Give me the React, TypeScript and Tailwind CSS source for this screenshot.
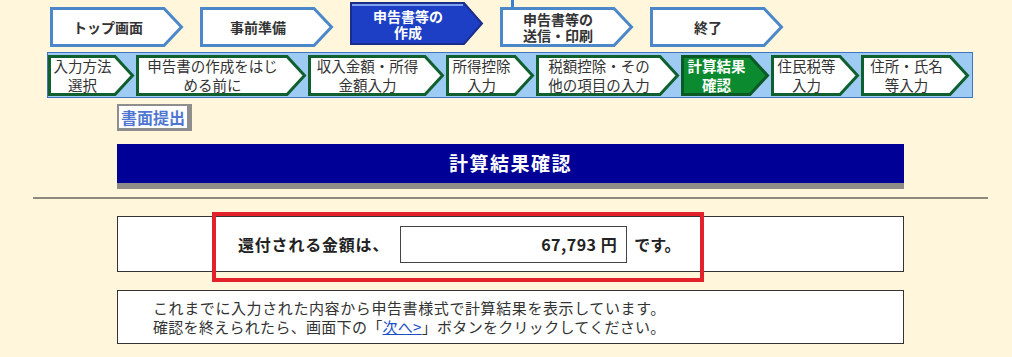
import React from "react";

type ArrowProps = {
  w: number;
  h: number;
  d: number;
  fill: string;
  stroke: string;
  sw: number;
  children: React.ReactNode;
  textClass: string;
  highlight?: string;
};

function Arrow({ w, h, d, fill, stroke, sw, children, textClass, highlight }: ArrowProps) {
  const s = sw / 2;
  const pts = `${s},${s} ${w - d},${s} ${w - s - 1},${h / 2} ${w - d},${h - s} ${s},${h - s}`;
  return (
    <div className="relative shrink-0" style={{ width: w, height: h }}>
      <svg className="absolute inset-0 overflow-visible" width={w} height={h}>
        <polygon points={pts} fill={fill} stroke={stroke} strokeWidth={sw} strokeLinejoin="miter" />
        {highlight ? (
          <line x1={sw} y1={sw + 1} x2={w - d - 1} y2={sw + 1} stroke={highlight} strokeWidth={2} />
        ) : null}
      </svg>
      <div
        className={`relative flex h-full flex-col items-center justify-center text-center ${textClass}`}
        style={{ width: w - d + 2 }}
      >
        {children}
      </div>
    </div>
  );
}

const topItems: { l1: string; l2?: string; active?: boolean }[] = [
  { l1: "トップ画面" },
  { l1: "事前準備" },
  { l1: "申告書等の", l2: "作成", active: true },
  { l1: "申告書等の", l2: "送信・印刷" },
  { l1: "終了" },
];

const subItems: { l1: string; l2: string; w: number; active?: boolean }[] = [
  { l1: "入力方法", l2: "選択", w: 87 },
  { l1: "申告書の作成をはじ", l2: "める前に", w: 171 },
  { l1: "収入金額・所得", l2: "金額入力", w: 137 },
  { l1: "所得控除", l2: "入力", w: 89 },
  { l1: "税額控除・その", l2: "他の項目の入力", w: 144 },
  { l1: "計算結果", l2: "確認", w: 89, active: true },
  { l1: "住民税等", l2: "入力", w: 89 },
  { l1: "住所・氏名", l2: "等入力", w: 109 },
];

export default function App() {
  return (
    <div className="relative h-[357px] w-[1012px] overflow-hidden bg-[#fff6db] font-['Noto_Sans_CJK_JP','Noto_Sans',sans-serif] text-[#222]">
      {/* small connector line at top */}
      <div className="absolute left-[511px] top-0 h-[8px] w-[3px] bg-[#3b7fd2]" />

      {/* top step row */}
      <div className="flex items-start gap-[16px] pl-[50px] pt-[7px]">
        {topItems.map((it, i) =>
          it.active ? (
            <div key={i} className="-mt-[5px]">
              <Arrow
                w={134}
                h={43}
                d={20}
                fill="#1d3fc6"
                stroke="#1a2d8a"
                sw={2}
                highlight="#7fa2ee"
                textClass="text-[14px] font-bold leading-[16px] text-white"
              >
                <span>{it.l1}</span>
                {it.l2 ? <span>{it.l2}</span> : null}
              </Arrow>
            </div>
          ) : (
            <Arrow
              key={i}
              w={134}
              h={40}
              d={20}
              fill="#ffffff"
              stroke="#4b87c9"
              sw={3}
              textClass="text-[14px] font-bold leading-[16px] text-[#333]"
            >
              <span>{it.l1}</span>
              {it.l2 ? <span>{it.l2}</span> : null}
            </Arrow>
          )
        )}
      </div>

      {/* sub step row */}
      <div className="ml-[47px] mt-[5px] flex h-[46px] w-[926px] items-center gap-[1px] border border-[#3e74c2] bg-[#9ecbf3]">
        {subItems.map((it, i) =>
          it.active ? (
            <Arrow
              key={i}
              w={it.w}
              h={41}
              d={20}
              fill="#0b8a2f"
              stroke="#0b5a25"
              sw={3}
              textClass="text-[14.5px] font-bold leading-[19px] text-white"
            >
              <span>{it.l1}</span>
              <span>{it.l2}</span>
            </Arrow>
          ) : (
            <Arrow
              key={i}
              w={it.w}
              h={41}
              d={20}
              fill="#ffffff"
              stroke="#0f5f2f"
              sw={3}
              textClass="text-[14.5px] leading-[19px] text-[#333]"
            >
              <span>{it.l1}</span>
              <span>{it.l2}</span>
            </Arrow>
          )
        )}
      </div>

      {/* 書面提出 button */}
      <div className="ml-[117px] mt-[6px] flex h-[27px] w-[75px] items-center justify-center border-b-[3px] border-l-2 border-r-[5px] border-t-2 border-[#8e8e8e] bg-white">
        <span className="text-[16px] font-bold leading-[22px] text-[#4f77d2]">書面提出</span>
      </div>

      {/* title bar */}
      <div className="ml-[117px] mt-[13px] w-[787px]">
        <div className="flex h-[39px] items-center justify-center bg-[#000096]">
          <span className="text-[19px] font-bold tracking-[1.5px] text-white">計算結果確認</span>
        </div>
        <div className="h-[6px] bg-[#8f8b86]" />
      </div>

      {/* horizontal rule */}
      <div className="ml-[33px] mt-[8px] h-[2px] w-[955px] bg-[#8d897c]" />

      {/* result box */}
      <div className="relative ml-[117px] mt-[17px] flex h-[56px] w-[787px] items-center border border-[#333] bg-white pl-[120px]">
        <span className="text-[16px] font-bold tracking-[0.8px] text-[#222]">還付される金額は、</span>
        <div className="ml-[11px] flex h-[37px] w-[227px] items-center justify-end border border-[#444] bg-white pr-[9px]">
          <span className="text-[16px] font-bold tracking-[0.5px] text-[#222]">67,793 円</span>
        </div>
        <span className="ml-[7px] text-[16px] font-bold text-[#222]">です。</span>
        {/* red annotation overlay */}
        <div className="pointer-events-none absolute left-[94px] top-[-5px] h-[70px] w-[492px] border-4 border-[#e2212b]" />
      </div>

      {/* message box */}
      <div className="ml-[117px] mt-[18px] w-[787px] border border-[#333] bg-white py-[7px] pl-[35px] text-[15px] leading-[19px] text-[#333]">
        <p className="tracking-[0.6px]">これまでに入力された内容から申告書様式で計算結果を表示しています。</p>
        <p className="tracking-[0.3px]">
          確認を終えられたら、画面下の「<span className="text-[#1a4fc8] underline">次へ&gt;</span>」ボタンをクリックしてください。
        </p>
      </div>
    </div>
  );
}
